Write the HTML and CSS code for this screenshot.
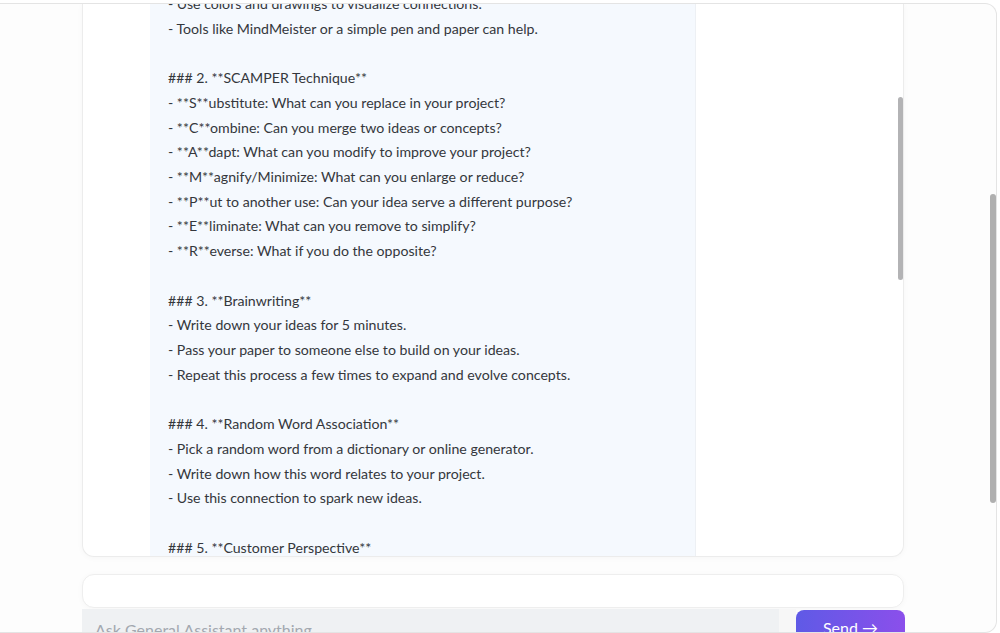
FILE: index.html
```html
<!DOCTYPE html>
<html>
<head>
<meta charset="utf-8">
<link rel="stylesheet" href="styles.css">
</head>
<body>
<div class="window">
  <div class="column">
    <div class="chat-card">
      <div class="bubble">
<div class="msg">- Use colors and drawings to visualize connections.
- Tools like MindMeister or a simple pen and paper can help.

### 2. **SCAMPER Technique**
- **S**ubstitute: What can you replace in your project?
- **C**ombine: Can you merge two ideas or concepts?
- **A**dapt: What can you modify to improve your project?
- **M**agnify/Minimize: What can you enlarge or reduce?
- **P**ut to another use: Can your idea serve a different purpose?
- **E**liminate: What can you remove to simplify?
- **R**everse: What if you do the opposite?

### 3. **Brainwriting**
- Write down your ideas for 5 minutes.
- Pass your paper to someone else to build on your ideas.
- Repeat this process a few times to expand and evolve concepts.

### 4. **Random Word Association**
- Pick a random word from a dictionary or online generator.
- Write down how this word relates to your project.
- Use this connection to spark new ideas.

### 5. **Customer Perspective**
- Imagine you are your customer.</div>
      </div>
      <div class="inner-thumb"></div>
    </div>
    <div class="input-card"></div>
    <div class="compose">
      <div class="textarea">Ask General Assistant anything</div>
      <div class="spacer"></div>
      <button class="send">Send →</button>
    </div>
  </div>
  <div class="outer-thumb"></div>
</div>
</body>
</html>
```

FILE: styles.css
```css
* { box-sizing: border-box; }
html, body { margin: 0; padding: 0; background: #ffffff; overflow: hidden; }
body { font-family: "Source Sans Pro", Lato, "Liberation Sans", sans-serif; }

.window {
  position: relative;
  margin-top: 3px;
  width: 997px;
  height: 630px;
  border: 1px solid #e4e4e4;
  border-left: none;
  border-radius: 0 12px 12px 0;
  background: #fdfdfd;
  overflow: hidden;
}

.column {
  margin-left: 82px;
  width: 822px;
  display: flex;
  flex-direction: column;
}

.chat-card {
  position: relative;
  height: 553px;
  background: #ffffff;
  border: 1px solid #ececec;
  border-top: none;
  border-radius: 0 0 12px 12px;
  box-shadow: 0 1px 6px rgba(0,0,0,0.03);
  overflow: hidden;
}

.bubble {
  margin-left: 67px;
  width: 546px;
  height: 100%;
  background: #f5f9fe;
  border-right: 1px solid #edf0f4;
  overflow: hidden;
  padding-left: 18px;
}

.msg {
  margin-top: -12px;
  white-space: pre;
  font-size: 14.15px;
  line-height: 24.72px;
  color: #34373c;
}

.inner-thumb {
  position: absolute;
  right: 0;
  top: 93px;
  width: 5px;
  height: 183px;
  border-radius: 3px;
  background: #b3b3b5;
}

.input-card {
  margin-top: 17px;
  height: 34px;
  background: #ffffff;
  border: 1px solid #eeeeee;
  border-radius: 12px;
  box-shadow: 0 1px 6px rgba(0,0,0,0.03);
}

.compose {
  margin-top: 1px;
  display: flex;
  align-items: flex-start;
  width: 823px;
}

.textarea {
  width: 697px;
  height: 40px;
  background: #eff1f3;
  color: #a3a8b0;
  font-size: 16px;
  padding: 11px 13px;
}

.spacer {
  width: 17px;
  height: 40px;
  background: #f7f7f7;
}

.send {
  margin-top: 1px;
  width: 109px;
  height: 40px;
  border: none;
  border-radius: 8px;
  background: linear-gradient(90deg, #5f5ae6, #8b4feb);
  color: #ffffff;
  font-family: inherit;
  font-size: 16px;
  padding: 0 0 6px;
  text-align: center;
}

.outer-thumb {
  position: absolute;
  left: 990px;
  top: 190px;
  width: 6px;
  height: 309px;
  border-radius: 3px;
  background: #b0b0b0;
}
```
